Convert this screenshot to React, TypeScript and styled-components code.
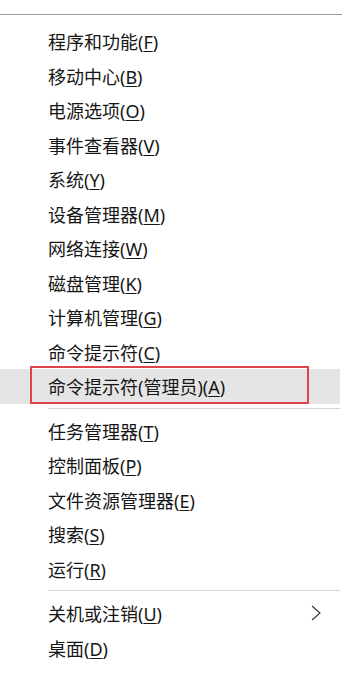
import React from "react";
import styled, { createGlobalStyle } from "styled-components";

const Global = createGlobalStyle`
  html, body {
    margin: 0;
    padding: 0;
    background: #ffffff;
  }
  body {
    font-family: "Noto Sans", "Noto Sans CJK SC", sans-serif;
  }
`;

const Menu = styled.div`
  width: 340px;
  padding-top: 14px;
  background: #ffffff;
`;

const TopRule = styled.div`
  width: 342px;
  height: 1px;
  background: #9a9a9a;
  margin-bottom: 9px;
`;

const Section = styled.div`
  display: flex;
  flex-direction: column;
`;

const Separator = styled.div`
  height: 1px;
  margin: 4px 0 5px 48px;
  background: #d6d6d6;
`;

const Item = styled.div<{ $active?: boolean }>`
  position: relative;
  height: 34.5px;
  display: flex;
  align-items: center;
  padding-left: 48px;
  padding-right: 12px;
  background: ${(p) => (p.$active ? "#e5e5e5" : "transparent")};
  font-family: "Noto Sans", "Noto Sans CJK SC", sans-serif;
  font-size: 18px;
  color: #161616;
  white-space: nowrap;
`;

const Label = styled.span`
  flex: 1;
`;

const Key = styled.span`
  text-decoration: underline;
  text-underline-offset: 2px;
  text-decoration-thickness: 1px;
`;

const Mark = styled.div`
  position: absolute;
  left: 30px;
  top: -3px;
  width: 279px;
  height: 38px;
  box-sizing: border-box;
  border: 2px solid #e2434a;
  pointer-events: none;
`;

const Chevron = styled.svg`
  width: 12px;
  height: 16px;
  margin-right: 6px;
  flex: none;
`;

type Entry = { text: string; key: string; active?: boolean; sub?: boolean };

const sections: Entry[][] = [
  [
    { text: "程序和功能", key: "F" },
    { text: "移动中心", key: "B" },
    { text: "电源选项", key: "O" },
    { text: "事件查看器", key: "V" },
    { text: "系统", key: "Y" },
    { text: "设备管理器", key: "M" },
    { text: "网络连接", key: "W" },
    { text: "磁盘管理", key: "K" },
    { text: "计算机管理", key: "G" },
    { text: "命令提示符", key: "C" },
    { text: "命令提示符(管理员)", key: "A", active: true },
  ],
  [
    { text: "任务管理器", key: "T" },
    { text: "控制面板", key: "P" },
    { text: "文件资源管理器", key: "E" },
    { text: "搜索", key: "S" },
    { text: "运行", key: "R" },
  ],
  [
    { text: "关机或注销", key: "U", sub: true },
    { text: "桌面", key: "D" },
  ],
];

export default function App() {
  return (
    <>
      <Global />
      <Menu>
        <TopRule />
        {sections.map((sec, si) => (
          <React.Fragment key={si}>
            {si > 0 && <Separator />}
            <Section>
              {sec.map((it) => (
                <Item key={it.text} $active={it.active}>
                  <Label>
                    {it.text}(<Key>{it.key}</Key>)
                  </Label>
                  {it.sub && (
                    <Chevron viewBox="0 0 12 16">
                      <polyline
                        points="2,1 10,8 2,15"
                        fill="none"
                        stroke="#333"
                        strokeWidth="1.1"
                      />
                    </Chevron>
                  )}
                  {it.active && <Mark />}
                </Item>
              ))}
            </Section>
          </React.Fragment>
        ))}
      </Menu>
    </>
  );
}
